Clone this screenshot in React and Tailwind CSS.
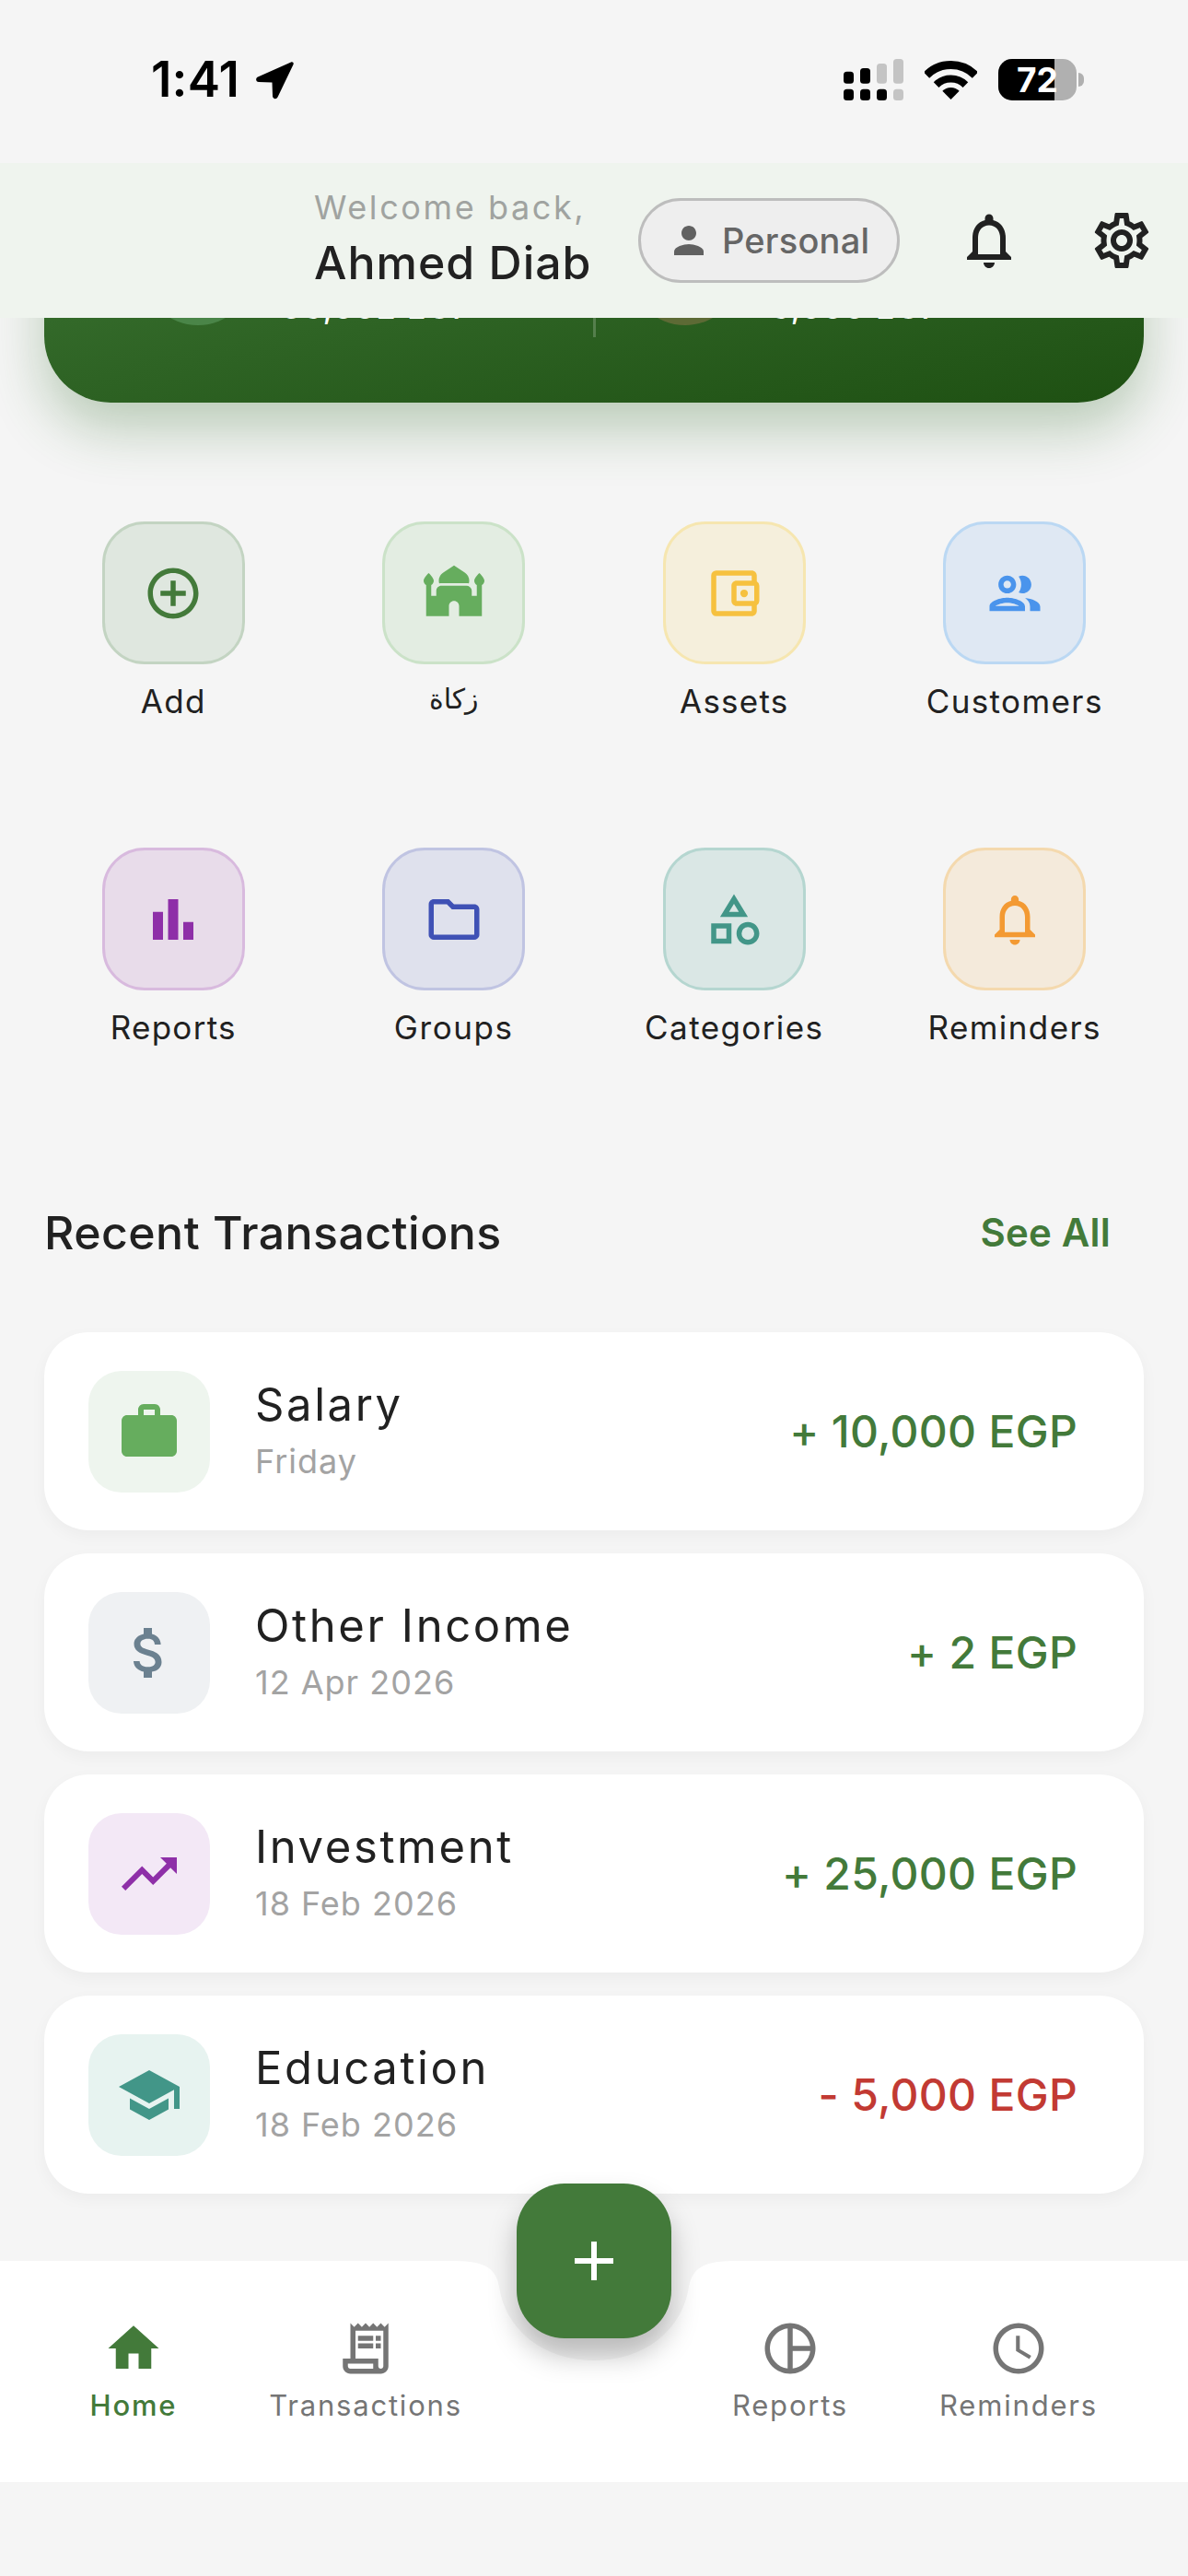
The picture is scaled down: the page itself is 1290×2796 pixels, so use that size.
import React from 'react';
import {
  MdAccessTime,
  MdAddCircleOutline,
  MdAttachMoney,
  MdBarChart,
  MdHome,
  MdMosque,
  MdNotificationsNone,
  MdOutlineAccountBalanceWallet,
  MdOutlineCategory,
  MdOutlineFolder,
  MdOutlineGroup,
  MdOutlineReceiptLong,
  MdOutlineSettings,
  MdPerson,
  MdPieChartOutline,
  MdSchool,
  MdTrendingUp,
  MdWork,
} from 'react-icons/md';

const font = "font-['Inter','Noto_Sans','DejaVu_Sans',sans-serif]";

const actions = [
  { label: 'Add', icon: MdAddCircleOutline, box: 'bg-[#dfe7df] border-[#c3d4c2]', color: 'text-[#437a3a]', text: 'text-[35px] tracking-[1.4px]' },
  { label: 'زكاة', icon: MdMosque, box: 'bg-[#e3ede2] border-[#cbe2c8]', color: 'text-[#66ad5e]', text: 'text-[30px] tracking-normal -translate-y-[3px]' },
  { label: 'Assets', icon: MdOutlineAccountBalanceWallet, box: 'bg-[#f5efdc] border-[#f6e6b0]', color: 'text-[#f6c13f]', text: 'text-[35px] tracking-[1.2px]' },
  { label: 'Customers', icon: MdOutlineGroup, box: 'bg-[#dfe8f3] border-[#bbd8f3]', color: 'text-[#4a94ec]', text: 'text-[35px] tracking-[1.4px]' },
  { label: 'Reports', icon: MdBarChart, box: 'bg-[#e8dcea] border-[#d8bade]', color: 'text-[#8e2fa8]', text: 'text-[35px] tracking-[1.3px]' },
  { label: 'Groups', icon: MdOutlineFolder, box: 'bg-[#dfe1ed] border-[#c0c4e2]', color: 'text-[#3f51b5]', text: 'text-[35px] tracking-[1.6px]' },
  { label: 'Categories', icon: MdOutlineCategory, box: 'bg-[#dae7e5] border-[#b5d6d0]', color: 'text-[#429688]', text: 'text-[35px] tracking-[1.4px]' },
  { label: 'Reminders', icon: MdNotificationsNone, box: 'bg-[#f4eadb] border-[#f4d9ae]', color: 'text-[#f39a33]', text: 'text-[35px] tracking-[1.4px]' },
];

const transactions = [
  { title: 'Salary', sub: 'Friday', amount: '+ 10,000 EGP', icon: MdWork, box: 'bg-[#eef5ee]', color: 'text-[#66ad5e]', amountColor: 'text-[#437a3a]' },
  { title: 'Other Income', sub: '12 Apr 2026', amount: '+ 2 EGP', icon: MdAttachMoney, box: 'bg-[#eff1f3]', color: 'text-[#6b8190]', amountColor: 'text-[#437a3a]' },
  { title: 'Investment', sub: '18 Feb 2026', amount: '+ 25,000 EGP', icon: MdTrendingUp, box: 'bg-[#f3e8f6]', color: 'text-[#8e2fa8]', amountColor: 'text-[#437a3a]' },
  { title: 'Education', sub: '18 Feb 2026', amount: '- 5,000 EGP', icon: MdSchool, box: 'bg-[#e7f3f0]', color: 'text-[#429688]', amountColor: 'text-[#c23a33]' },
];

const navItems = [
  { label: 'Home', icon: MdHome, width: 'w-[290px]', color: 'text-[#437a3a]', weight: 'font-medium' },
  { label: 'Transactions', icon: MdOutlineReceiptLong, width: 'w-[214px]', color: 'text-[#757575]', weight: 'font-normal' },
  { spacer: true, width: 'w-[240px]' },
  { label: 'Reports', icon: MdPieChartOutline, width: 'w-[228px]', color: 'text-[#757575]', weight: 'font-normal' },
  { label: 'Reminders', icon: MdAccessTime, width: 'w-[268px]', color: 'text-[#757575]', weight: 'font-normal' },
];

function StatusBar() {
  return (
    <div className="h-[177px] flex items-start justify-between pl-[164px] pr-[113px] pt-[64px]">
      <div className="flex items-center h-[45px] gap-[17px]">
        <span className="text-[53px] leading-[45px] font-semibold text-black tracking-[0.2px]">1:41</span>
        <svg width="42" height="42" viewBox="0 0 42 42">
          <path d="M39 1.500 3 17.500c-3 1.500-2.200 5.500 1 5.600l14.500.4.500 14.800c.1 3.200 4.200 4 5.600 1L41.500 4c.8-1.800-.8-3.400-2.500-2.500z" fill="#000" />
        </svg>
      </div>
      <div className="flex items-center h-[45px] gap-[23px]">
        <svg width="65" height="45" viewBox="0 0 65 45">
          <rect x="0" y="13.700" width="11" height="13" rx="3.500" fill="#000" />
          <rect x="18" y="10" width="11" height="16.700" rx="3.500" fill="#000" />
          <rect x="36" y="5" width="11" height="21.700" rx="3.500" fill="#c4c4c4" />
          <rect x="54" y="0" width="11" height="26.700" rx="3.500" fill="#c4c4c4" />
          <rect x="0" y="32.700" width="11" height="12.300" rx="3.500" fill="#000" />
          <rect x="18" y="32.700" width="11" height="12.300" rx="3.500" fill="#000" />
          <rect x="36" y="32.700" width="11" height="12.300" rx="3.500" fill="#000" />
          <rect x="54" y="32.700" width="11" height="12.300" rx="3.500" fill="#c4c4c4" />
        </svg>
        <svg width="57" height="42" viewBox="0 0 57 42">
          <path d="M2 15.500A37.500 37.500 0 0 1 55 15.500" fill="none" stroke="#000" strokeWidth="9" />
          <path d="M12.600 26.100A22.500 22.500 0 0 1 44.400 26.100" fill="none" stroke="#000" strokeWidth="8" />
          <path d="M28.500 42 19.300 32.800A13 13 0 0 1 37.700 32.800Z" fill="#000" />
        </svg>
        <div className="flex items-center gap-[2px]">
          <div className="relative w-[85px] h-[45px] rounded-[15px] overflow-hidden bg-[#b0b0b0] flex items-center justify-center">
            <div className="absolute left-0 top-0 bottom-0 w-[61px] bg-black" />
            <span className="relative text-[37px] leading-none font-bold text-white">72</span>
          </div>
          <div className="w-[6px] h-[15px] rounded-r-full bg-[#b0b0b0]" />
        </div>
      </div>
    </div>
  );
}

function Header() {
  return (
    <div className="relative z-10 h-[168px] bg-[#eff4ee] flex items-center pl-[341px]">
      <div className="w-[352px] shrink-0 mb-[14px]">
        <div className="text-[36px] leading-[54px] text-[#a0a3a0] tracking-[2.6px]">Welcome back,</div>
        <div className="mt-[8px] text-[50px] leading-[50px] font-medium text-[#212121] tracking-[1px]">Ahmed Diab</div>
      </div>
      <div className="w-[284px] h-[92px] shrink-0 rounded-full border-[3px] border-[#bdbdbd] bg-[#eeeeee] flex items-center pl-[28px] gap-[12px]">
        <MdPerson size={48} className="text-[#616161] shrink-0" />
        <span className="text-[38px] leading-none font-medium text-[#666666] tracking-[0.2px]">Personal</span>
      </div>
      <MdNotificationsNone size={72} className="text-[#212121] ml-[61px] shrink-0" />
      <MdOutlineSettings size={72} className="text-[#212121] ml-[72px] shrink-0" />
    </div>
  );
}

function Hero() {
  return (
    <div className="mx-[48px] -mt-[130px] h-[222px] rounded-[72px] bg-gradient-to-br from-[#3c7433] to-[#1e5012] shadow-[0_28px_60px_rgba(46,106,40,0.3)] flex items-end pb-[84px] text-white">
      <div className="w-[597px] flex items-end pl-[107px] gap-[31px]">
        <div className="w-[120px] h-[120px] rounded-full bg-[#4a8548] shrink-0" />
        <span className="text-[34px] leading-[34px] font-medium mb-[2px] tracking-[1.6px]">35,002 EGP</span>
      </div>
      <div className="w-[3px] h-[120px] bg-white/20 mb-[-13px] -ml-[1px] shrink-0" />
      <div className="flex items-end pl-[37px] gap-[33px]">
        <div className="w-[120px] h-[120px] rounded-full bg-[#5d6a35] shrink-0" />
        <span className="text-[34px] leading-[34px] font-medium mb-[2px] tracking-[1.6px]">5,000 EGP</span>
      </div>
    </div>
  );
}

function QuickActions() {
  return (
    <div className="mt-[129px] mx-[36px] grid grid-cols-4 gap-y-[132px]">
      {actions.map((a) => {
        const Icon = a.icon;
        return (
          <div key={a.label} className="flex flex-col items-center">
            <div className={`w-[155px] h-[155px] rounded-[46px] border-[3px] flex items-center justify-center ${a.box}`}>
              <Icon size={66} className={a.color} />
            </div>
            <div className={`mt-[13px] leading-[54px] text-[#212121] ${a.text}`}>{a.label}</div>
          </div>
        );
      })}
    </div>
  );
}

function Transactions() {
  return (
    <div className="mx-[48px]">
      <div className="mt-[160px] flex items-center justify-between pr-[36px]">
        <h2 className="text-[50px] leading-[72px] font-medium text-[#212121] tracking-[0.45px]">Recent Transactions</h2>
        <span className="text-[42px] leading-[72px] font-semibold text-[#437a3a] tracking-[0.2px]">See All</span>
      </div>
      <div className="mt-[72px] flex flex-col gap-[25px]">
        {transactions.map((t) => {
          const Icon = t.icon;
          return (
            <div key={t.title} className="h-[215px] rounded-[48px] bg-white shadow-[0_6px_18px_rgba(0,0,0,0.04)] flex items-center pl-[48px] pr-[72px]">
              <div className={`w-[132px] h-[132px] rounded-[36px] flex items-center justify-center shrink-0 ${t.box}`}>
                <Icon size={72} className={t.color} />
              </div>
              <div className="ml-[49px] flex-1">
                <div className="mt-[-2px] text-[49px] leading-[62px] text-[#212121] tracking-[2.6px]">{t.title}</div>
                <div className="mt-[5px] text-[36px] leading-[50px] text-[#a3a3a3] tracking-[1px]">{t.sub}</div>
              </div>
              <div className={`text-[48px] leading-none font-medium tracking-[0.3px] ${t.amountColor}`}>{t.amount}</div>
            </div>
          );
        })}
      </div>
    </div>
  );
}

function BottomNav() {
  return (
    <div className="relative mt-[73px] h-[240px] bg-white flex items-start pt-[62px]">
      <svg className="absolute left-[480px] top-0" width="330" height="110" viewBox="0 0 330 110">
        <path d="M10 0C44 0 58 6 62 28 69 75 110 108 165 108 220 108 261 75 268 28 272 6 286 0 320 0Z" fill="#f5f5f5" />
      </svg>
      <button className="absolute left-[561px] -top-[84px] w-[168px] h-[168px] rounded-[52px] bg-[#437a3a] shadow-[0_18px_30px_rgba(0,0,0,0.25)] flex items-center justify-center">
        <svg width="42" height="42" viewBox="0 0 42 42">
          <path d="M18 0h6v18h18v6H24v18h-6V24H0v-6h18z" fill="#fff" />
        </svg>
      </button>
      {navItems.map((item, i) => {
        if (item.spacer) return <div key={i} className={item.width} />;
        const Icon = item.icon;
        return (
          <div key={item.label} className={`relative flex flex-col items-center ${item.width} ${item.color}`}>
            <Icon size={66} />
            <span className={`mt-[6px] text-[31px] leading-[45px] tracking-[1.8px] ${item.weight}`}>{item.label}</span>
          </div>
        );
      })}
    </div>
  );
}

export default function App() {
  return (
    <div className={`min-h-screen w-[1290px] bg-[#f5f5f5] overflow-hidden ${font}`}>
      <StatusBar />
      <Header />
      <Hero />
      <QuickActions />
      <Transactions />
      <BottomNav />
    </div>
  );
}
